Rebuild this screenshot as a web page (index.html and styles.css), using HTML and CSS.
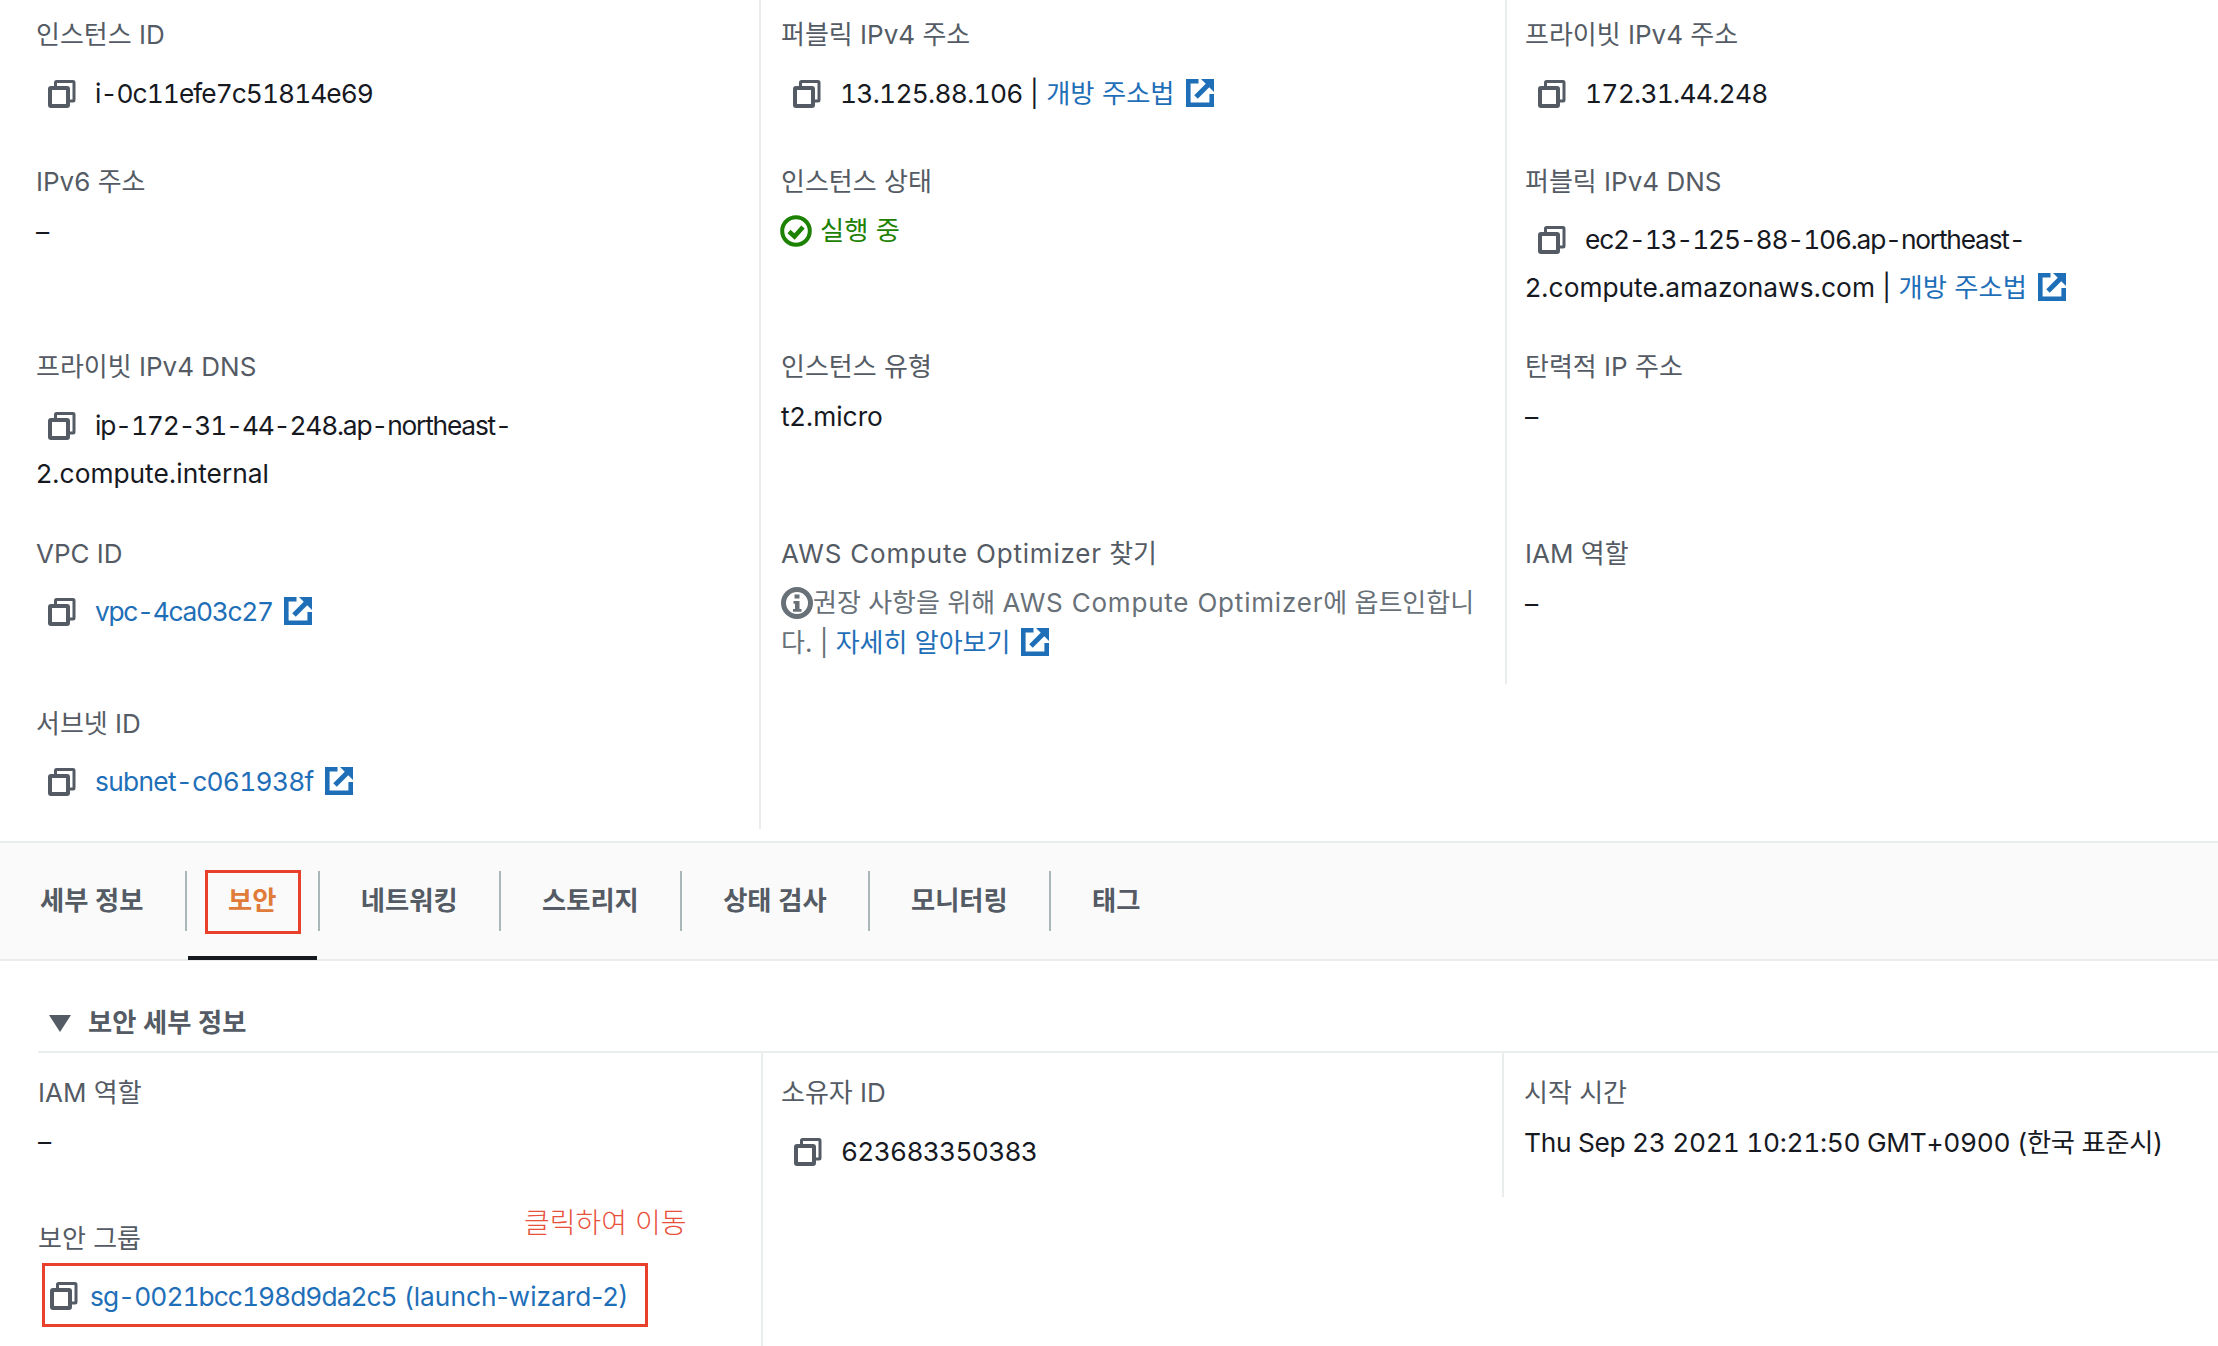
FILE: index.html
```html
<!DOCTYPE html>
<html lang="ko">
<head>
<meta charset="utf-8">
<title>인스턴스 요약</title>
<link rel="stylesheet" href="styles.css">
</head>
<body>
<svg class="defs" width="0" height="0" aria-hidden="true">
  <symbol id="copy" viewBox="0 0 28 28"><path d="M7.500 6V2.500a1 1 0 0 1 1-1H25a1 1 0 0 1 1 1V20a1 1 0 0 1-1 1h-3" fill="none" stroke="currentColor" stroke-width="3"/><rect x="2" y="8" width="18" height="18" rx="1" fill="none" stroke="currentColor" stroke-width="4"/></symbol>
  <symbol id="ext" viewBox="0 0 28 28"><path d="M12.500 2.300H2.300v23.400h23.400V15" fill="none" stroke="currentColor" stroke-width="4.600"/><path d="M15 0h13v13z" fill="currentColor"/><path d="M10 18L22 6" fill="none" stroke="currentColor" stroke-width="5"/></symbol>
</svg>
<section class="grid top-grid">
  <div class="field"><div class="label">인스턴스 ID</div><div class="value copy-value"><svg class="copy-icon"><use href="#copy"/></svg><span class="id tight">i-0c11efe7c51814e69</span></div></div>
  <div class="field"><div class="label">퍼블릭 IPv4 주소</div><div class="value copy-value"><svg class="copy-icon"><use href="#copy"/></svg><span class="id">13.125.88.106</span> | <a class="link">개방 주소법<svg class="ext-icon"><use href="#ext"/></svg></a></div></div>
  <div class="field"><div class="label">프라이빗 IPv4 주소</div><div class="value copy-value"><svg class="copy-icon"><use href="#copy"/></svg><span class="id">172.31.44.248</span></div></div>

  <div class="field"><div class="label">IPv6 주소</div><div class="value plain">–</div></div>
  <div class="field"><div class="label">인스턴스 상태</div><div class="value status"><svg class="status-icon" viewBox="0 0 32 32"><circle cx="16" cy="16" r="13.800" fill="none" stroke="currentColor" stroke-width="4"/><path d="M9 16.500l5.500 5 8.500-9.500" fill="none" stroke="currentColor" stroke-width="4.500"/></svg>실행 중</div></div>
  <div class="field"><div class="label">퍼블릭 IPv4 DNS</div><div class="value copy-value narrow raised"><svg class="copy-icon"><use href="#copy"/></svg><span class="id wide">ec2-13-125-88-106.ap-northeast-</span>2.compute.amazonaws.com | <a class="link">개방 주소법<svg class="ext-icon"><use href="#ext"/></svg></a></div></div>

  <div class="field"><div class="label">프라이빗 IPv4 DNS</div><div class="value copy-value narrow"><svg class="copy-icon"><use href="#copy"/></svg><span class="id wide">ip-172-31-44-248.ap-northeast-</span>2.compute.internal</div></div>
  <div class="field"><div class="label">인스턴스 유형</div><div class="value plain">t2.micro</div></div>
  <div class="field"><div class="label">탄력적 IP 주소</div><div class="value plain">–</div></div>

  <div class="field"><div class="label">VPC ID</div><div class="value copy-value raised"><svg class="copy-icon"><use href="#copy"/></svg><a class="link"><span class="id tighter">vpc-4ca03c27</span><svg class="ext-icon"><use href="#ext"/></svg></a></div></div>
  <div class="field"><div class="label"><span class="latin">AWS Compute Optimizer</span> 찾기</div><div class="note"><svg class="info-icon" viewBox="0 0 32 32"><circle cx="16" cy="16" r="13.500" fill="none" stroke="currentColor" stroke-width="5"/><path d="M12.500 14h6v8h2v2.800h-8.500V22h2v-5.200h-1.500zM13.500 7.500h5v4h-5z" fill="currentColor"/></svg>권장 사항을 위해 <span class="latin">AWS Compute Optimizer</span>에 옵트인합니<br>다. | <a class="link">자세히 알아보기<svg class="ext-icon"><use href="#ext"/></svg></a></div></div>
  <div class="field short"><div class="label">IAM 역할</div><div class="value plain">–</div></div>

  <div class="field"><div class="label">서브넷 ID</div><div class="value copy-value raised"><svg class="copy-icon"><use href="#copy"/></svg><a class="link"><span class="id">subnet-c061938f</span><svg class="ext-icon"><use href="#ext"/></svg></a></div></div>
  <div class="field empty"></div>
  <div class="field blank"></div>
</section>

<nav class="tabs">
  <div class="tab first">세부 정보</div>
  <div class="tab active">보안<span class="tab-mark"></span></div>
  <div class="tab">네트워킹</div>
  <div class="tab">스토리지</div>
  <div class="tab">상태 검사</div>
  <div class="tab">모니터링</div>
  <div class="tab">태그</div>
</nav>

<h2 class="section-title"><span class="triangle"></span>보안 세부 정보</h2>

<section class="grid bottom-grid">
  <div class="field"><div class="label">IAM 역할</div><div class="value">–</div></div>
  <div class="field"><div class="label">소유자 ID</div><div class="value copy-value"><svg class="copy-icon"><use href="#copy"/></svg><span class="id">623683350383</span></div></div>
  <div class="field short"><div class="label">시작 시간</div><div class="value lowered"><span class="time">Thu Sep 23 2021 10:21:50 GMT+0900 (한국 표준시)</span></div></div>

  <div class="field sg-field"><div class="label">보안 그룹</div><span class="hint">클릭하여 이동</span><div class="sg-box"><svg class="copy-icon"><use href="#copy"/></svg><a class="link"><span class="id tight">sg-0021bcc198d9da2c5</span> (launch-wizard-2)</a></div></div>
  <div class="field empty"></div>
  <div class="field blank"></div>
</section>
</body>
</html>
```

FILE: styles.css
```css
* { box-sizing: border-box; }
html, body { margin: 0; padding: 0; height: 1346px; overflow: hidden; background: #fff; }
body { font-family: "Inter", "Noto Sans CJK KR", sans-serif; font-size: 26.300px; color: #16191f; }
.defs { position: absolute; }
.grid { display: grid; }
.top-grid { grid-template-columns: 759px 746px 713px; grid-template-rows: 147px 185px 187px 170px 140px; height: 829px; }
.bottom-grid { grid-template-columns: 723px 741px 716px; grid-template-rows: 146px 148px; margin-left: 38px; border-top: 2px solid #eaeded; height: 294px; }
.field { padding: 21px 0 0 20px; border-left: 2px solid #eaeded; position: relative; min-width: 0; }
.grid .field:nth-child(3n+1) { border-left: 0; }
.top-grid .field:nth-child(3n+1) { padding-left: 36px; }
.top-grid .field:nth-child(3n) { padding-left: 18px; }
.top-grid .field:nth-child(3n) .copy-icon { margin-left: 13px; }
.bottom-grid .field:nth-child(3n+1) { padding-left: 0; }
.bottom-grid .field { padding-top: 26px; }
.bottom-grid .field:nth-child(3n+2) { padding-left: 18px; }
.bottom-grid .copy-value { padding-left: 1px; }
.field.short { align-self: start; height: 165px; }
.bottom-grid .field.short { height: 144px; }
.field.blank { border-left: 0; }
.label { font-size: 26px; line-height: 28px; color: #545b64; }
.latin { letter-spacing: 0.800px; }
.id { font-variant-numeric: tabular-nums; letter-spacing: -0.700px; }
.id.tight { letter-spacing: -0.950px; }
.id.wide { letter-spacing: -1.200px; }
.id.tighter { letter-spacing: -1.300px; }
.time { font-variant-numeric: tabular-nums; letter-spacing: -0.300px; }
.value { margin-top: 11px; line-height: 48px; }
.value.plain { margin-top: 12px; }
.value.lowered { margin-top: 12px; }
.copy-value { margin-top: 21px; }
.copy-value.raised { margin-top: 20px; }
.narrow { max-width: 615px; }
.copy-icon { display: inline-block; width: 28px; height: 28px; margin: 0 19px 0 12px; vertical-align: -5px; color: #545b64; }
.ext-icon { display: inline-block; width: 28px; height: 28px; margin-left: 11px; vertical-align: -4px; color: #1f6fb8; }
.link { color: #1f6fb8; }
.status { display: flex; align-items: center; gap: 8px; color: #1d8102; margin-left: -1px; }
.status-icon { width: 32px; height: 32px; }
.note { margin-top: 15px; font-size: 26px; line-height: 40px; color: #687078; }
.info-icon { display: inline-block; width: 32px; height: 32px; vertical-align: -7px; color: #687078; }
.tabs { display: flex; height: 120px; margin-top: 12px; background: #fafafa; border-top: 2px solid #eaeded; border-bottom: 2px solid #eaeded; padding-left: 40px; align-items: flex-start; }
.tab { position: relative; height: 60px; margin-top: 28px; padding: 0 41.200px; line-height: 60px; font-size: 26.300px; font-weight: 600; color: #545b64; border-left: 2px solid #aab7b8; }
.tab.first { border-left: 0; padding: 0 41.500px 0 0; }
.tab.active { color: #e07b39; }
.tab.active::before { content: ""; box-sizing: border-box; position: absolute; left: 18px; top: -1px; width: 96px; height: 64px; border: 3px solid #e8402a; }
.tab-mark { position: absolute; left: 1px; right: 1px; top: 85px; height: 4px; background: #16191f; }
.section-title { display: flex; align-items: center; margin: 46px 0 12px 49px; font-size: 26.300px; line-height: 32px; font-weight: 600; color: #545b64; height: 32px; }
.triangle { width: 0; height: 0; margin-right: 17px; border-left: 11px solid transparent; border-right: 11px solid transparent; border-top: 17px solid #545b64; }
.hint { position: absolute; left: 486px; top: 6px; font-size: 28px; line-height: 36px; color: #e8503a; font-weight: 300; }
.sg-box { display: flex; align-items: center; width: 606px; height: 64px; margin: 10px 0 0 4px; padding-top: 2px; border: 3px solid #e8402a; white-space: pre; }
.sg-box .copy-icon { margin: 0 12px 0 5px; }
```
